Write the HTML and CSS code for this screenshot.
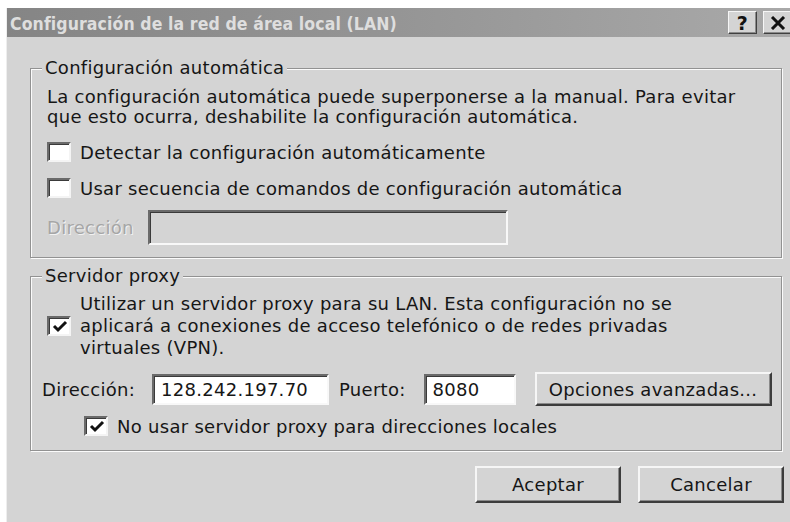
FILE: index.html
```html
<!DOCTYPE html>
<html lang="es">
<head>
<meta charset="utf-8">
<title>Configuración de la red de área local (LAN)</title>
<link rel="stylesheet" href="styles.css">
</head>
<body>
<div class="window">
  <div class="titlebar">
    <span class="title">Configuración de la red de área local (LAN)</span>
    <div class="caption-buttons">
      <span class="caption-btn help">?</span>
      <span class="caption-btn close">
        <svg width="16" height="14" viewBox="0 0 16 14"><path d="M2 1 L14 13 M14 1 L2 13" stroke="#111" stroke-width="3"/></svg>
      </span>
    </div>
  </div>

  <div class="client">
    <fieldset class="group group-auto">
      <legend>Configuración automática</legend>
      <p class="note">La configuración automática puede superponerse a la manual. Para evitar<br>que esto ocurra, deshabilite la configuración automática.</p>
      <div class="check first">
        <span class="box"></span>
        <span class="check-label">Detectar la configuración automáticamente</span>
      </div>
      <div class="check second">
        <span class="box"></span>
        <span class="check-label">Usar secuencia de comandos de configuración automática</span>
      </div>
      <div class="addr-row">
        <span class="disabled-label">Dirección</span>
        <span class="field field-disabled"></span>
      </div>
    </fieldset>

    <fieldset class="group group-proxy">
      <legend>Servidor proxy</legend>
      <div class="check multi">
        <span class="box checked">
          <svg width="16" height="14" viewBox="0 0 16 14"><path d="M2 6 L6 10 L14 2" fill="none" stroke="#111" stroke-width="3"/></svg>
        </span>
        <span class="check-label">Utilizar un servidor proxy para su LAN. Esta configuración no se<br>aplicará a conexiones de acceso telefónico o de redes privadas<br>virtuales (VPN).</span>
      </div>
      <div class="proxy-row">
        <span class="row-label">Dirección:</span>
        <span class="field field-address">128.242.197.70</span>
        <span class="row-label port-label">Puerto:</span>
        <span class="field field-port">8080</span>
        <span class="button advanced">Opciones avanzadas...</span>
      </div>
      <div class="check bypass">
        <span class="box checked">
          <svg width="16" height="14" viewBox="0 0 16 14"><path d="M2 6 L6 10 L14 2" fill="none" stroke="#111" stroke-width="3"/></svg>
        </span>
        <span class="check-label">No usar servidor proxy para direcciones locales</span>
      </div>
    </fieldset>

    <div class="actions">
      <span class="button action">Aceptar</span>
      <span class="button action">Cancelar</span>
    </div>
  </div>
</div>
</body>
</html>
```

FILE: styles.css
```css
html, body {
  margin: 0;
  padding: 0;
  background: #ffffff;
}

body {
  width: 790px;
  height: 522px;
  overflow: hidden;
  font-family: "DejaVu Sans", Verdana, sans-serif;
  font-size: 18px;
  letter-spacing: 0.28px;
  color: #161616;
}

.window {
  margin: 8px 0 0 6px;
  width: 784px;
  height: 514px;
  background: #d4d4d4;
  border-left: 1px solid #eeeeee;
  box-sizing: border-box;
  display: flex;
  flex-direction: column;
}

/* caption bar */
.titlebar {
  height: 29px;
  flex: none;
  display: flex;
  align-items: center;
  justify-content: space-between;
  background: linear-gradient(90deg, #858585 0%, #959595 50%, #a9a9a9 100%);
}

.title {
  padding: 2px 0 0 3px;
  font-weight: bold;
  font-size: 17.5px;
  font-stretch: condensed;
  letter-spacing: 0.1px;
  color: #dedede;
}

.caption-buttons {
  display: flex;
  gap: 6px;
  margin-right: -2px;
}

.caption-btn {
  width: 29px;
  height: 23px;
  box-sizing: border-box;
  display: flex;
  align-items: center;
  justify-content: center;
  background: #d4d4d4;
  border: 1px solid;
  border-color: #f6f6f6 #404040 #404040 #f6f6f6;
  box-shadow: inset -1px -1px 0 #8a8a8a;
  font-weight: bold;
  font-size: 19px;
  color: #111;
}

/* dialog area */
.client {
  flex: 1;
  padding: 20px 8px 0 23px;
  display: flex;
  flex-direction: column;
}

.group {
  margin: 0;
  padding: 0 16px 12px 16px;
  border: 1px solid #929292;
  box-shadow: inset 1px 1px 0 #fbfbfb, 1px 1px 0 #fbfbfb;
  min-width: 0;
}

.group legend {
  margin-left: -5px;
  padding: 0 3px;
  line-height: 22px;
  background: #d4d4d4;
}

.note {
  margin: 8px 0 0 0;
  line-height: 20px;
}

.check {
  display: flex;
  align-items: center;
  gap: 9px;
  height: 24px;
}

.check.first {
  margin-top: 13px;
}

.check.second {
  margin-top: 12px;
}

.box {
  width: 24px;
  height: 20px;
  flex: none;
  box-sizing: border-box;
  background: #ffffff;
  border: 2px solid;
  border-color: #6a6a6a #f4f4f4 #f4f4f4 #6a6a6a;
  box-shadow: inset 1px 1px 0 #3a3a3a;
  display: flex;
  align-items: center;
  justify-content: center;
}

.box svg {
  margin: 1px 0 0 1px;
}

.addr-row {
  margin-top: 10px;
  display: flex;
  align-items: center;
  gap: 14px;
}

.disabled-label {
  color: #a6a6a6;
  text-shadow: 1px 1px 0 #f2f2f2;
}

.field {
  flex: none;
  height: 33px;
  box-sizing: border-box;
  border: 2px solid;
  border-color: #6a6a6a #f8f8f8 #f8f8f8 #6a6a6a;
  box-shadow: inset 1px 1px 0 #3a3a3a;
  background: #ffffff;
  display: flex;
  align-items: center;
  padding-left: 7px;
}

.field-disabled {
  width: 360px;
  height: 35px;
  background: #d4d4d4;
}

.group-proxy {
  margin-top: 7px;
}

.check.multi {
  height: auto;
  margin-top: 6px;
  line-height: 22px;
}

.proxy-row {
  margin: 13px -12px 0 -5px;
  display: flex;
  align-items: center;
  height: 34px;
}

.row-label {
  flex: none;
}

.field-address {
  margin-left: 17px;
  width: 177px;
  height: 31px;
}

.port-label {
  margin-left: 10px;
}

.field-port {
  margin-left: 18px;
  width: 92px;
  height: 31px;
}

.button {
  box-sizing: border-box;
  display: flex;
  align-items: center;
  justify-content: center;
  background: #d4d4d4;
  border: 2px solid;
  border-color: #f6f6f6 #3c3c3c #3c3c3c #f6f6f6;
  box-shadow: inset -1px -1px 0 #8a8a8a;
}

.advanced {
  margin-left: 19px;
  width: 237px;
  height: 34px;
  flex: none;
}

.check.bypass {
  margin: 8px 0 0 37px;
}

.actions {
  margin: 15px -2px 0 0;
  display: flex;
  justify-content: flex-end;
  gap: 17px;
}

.action {
  width: 146px;
  height: 37px;
}
```
